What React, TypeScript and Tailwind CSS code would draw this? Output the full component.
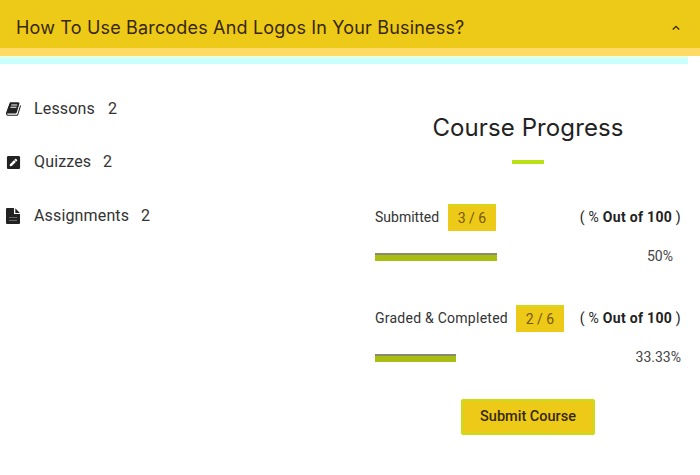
import React from "react";
import { FaPenSquare } from "react-icons/fa";

function BookIcon({ className }: { className?: string }) {
  return (
    <svg className={className} viewBox="0 0 1792 1792" fill="currentColor">
      <path d="M1639 478q40 57 18 129l-275 906q-19 64-76.5 107.5t-122.5 43.5h-923q-77 0-148.5-53.5t-99.5-131.5q-24-67-2-127 0-4 3-27t4-37q1-8-3-21.5t-3-19.5q2-11 8-21t16.5-23.5 16.5-23.5q23-38 45-91.5t30-91.5q3-10 .5-30t-.5-28q3-11 17-28t17-23q21-36 42-92t25-90q1-9-2.5-32t.5-28q4-13 22-30.5t22-22.5q19-26 42.5-84.5t27.5-96.5q1-8-3-25.5t-2-26.5q2-8 9-18t18-23 17-21q8-12 16.5-30.5t15-35 16-36 19.5-32 26.5-23.5 36-11.5 47.5 5.5l-1 3q38-9 51-9h761q74 0 114 56t18 130l-274 906q-36 119-71.5 153.5t-128.5 34.5h-869q-27 0-38 15-11 16-1 43 24 70 144 70h923q29 0 56-15.5t35-41.5l300-987q7-22 5-57 38 15 59 43zm-1064 2q-4 13 2 22.5t20 9.5h608q13 0 25.5-9.5t16.5-22.5l21-64q4-13-2-22.5t-20-9.5h-608q-13 0-25.5 9.5t-16.5 22.5zm-83 256q-4 13 2 22.5t20 9.5h608q13 0 25.5-9.5t16.5-22.5l21-64q4-13-2-22.5t-20-9.5h-608q-13 0-25.5 9.5t-16.5 22.5z" />
    </svg>
  );
}

function FileIcon({ className }: { className?: string }) {
  return (
    <svg className={className} viewBox="0 0 16 16" fill="currentColor">
      <path d="M1 0h7v6h6v9a1 1 0 0 1-1 1H1a1 1 0 0 1-1-1V1a1 1 0 0 1 1-1Z" />
      <path d="M9.3 0.3 13.9 4.9H9.3Z" />
      <path d="M3 9.5h8M3 12.5h8" stroke="#777" strokeWidth="0.8" />
    </svg>
  );
}

const items = [
  { label: "Lessons", count: 2, Icon: BookIcon, iconClass: "h-4 w-4", labelClass: "w-[62px]" },
  { label: "Quizzes", count: 2, Icon: FaPenSquare, iconClass: "h-[15px] w-[15px] mr-px", labelClass: "w-[57px]" },
  { label: "Assignments", count: 2, Icon: FileIcon, iconClass: "h-4 w-4", labelClass: "w-[95px]" },
];

function OutOf() {
  return (
    <span className="ml-auto whitespace-nowrap text-[14px] tracking-[0.3px] text-[#222]">
      ( % <b className="font-bold">Out of 100</b> )
    </span>
  );
}

function Progress({ label, score, percent, labelClass }: { label: string; score: string; percent: number; labelClass: string }) {
  return (
    <div className="h-[101px]">
      <div className="flex h-[27px] items-center">
        <span className={`whitespace-nowrap text-[14px] text-[#333] ${labelClass}`}>{label}</span>
        <span className="ml-2 flex h-[27px] w-12 items-center justify-center border-t-2 border-[#d5d819] bg-[#eeca18] text-[14px] text-[#76570c]">{score}</span>
        <OutOf />
      </div>
      <div className="mt-[15px] flex h-5 items-center justify-between">
        <div className="mt-[2px] h-2 w-[243px]">
          <div className="h-full border-t-2 border-[#888a70] bg-[#a9bd12]" style={{ width: `${percent}%` }} />
        </div>
        <span className={`text-[14px] text-[#444] ${percent === 50 ? "mr-2" : ""}`}>{percent}%</span>
      </div>
    </div>
  );
}

export default function App() {
  return (
    <div className="h-[475px] w-[700px] overflow-hidden bg-white font-['Roboto',sans-serif]">
      <header className="flex h-14 items-center justify-between border-b-8 border-[#ffdb65] bg-[#edca18] pt-[7px] pr-5 pl-4">
        <h1 className="whitespace-nowrap font-['Inter',sans-serif] text-[18px] tracking-[0.17px] text-[#38270a]">
          How To Use Barcodes And Logos In Your Business?
        </h1>
        <svg className="h-2 w-2" viewBox="0 0 8 8" fill="none" stroke="#38270a" strokeWidth="1.3">
          <path d="M0.8 5.5 4 2.3 7.2 5.5" />
        </svg>
      </header>
      <div className="h-2 w-[688px] bg-gradient-to-b from-[#e9ffe0] via-[#c8ffff] to-[#c8ffff]" />
      <main className="flex">
        <ul className="w-[375px] pt-[31px] pl-[6px]">
          {items.map(({ label, count, Icon, iconClass, labelClass }) => (
            <li key={label} className="mb-[26.5px] flex h-[27px] items-center gap-3 text-[16px] text-[#333]">
              <Icon className={`shrink-0 text-[#222] ${iconClass}`} />
              <span className={`tracking-[0.15px] ${labelClass}`}>{label}</span>
              <span>{count}</span>
            </li>
          ))}
        </ul>
        <section className="w-[306px] pt-[48px]">
          <h2 className="text-center font-['Inter',sans-serif] text-[24px] leading-8 tracking-[0.1px] text-[#222]">Course Progress</h2>
          <div className="mx-auto mt-4 h-1 w-8 bg-[#bce016]" />
          <div className="mt-[40px]">
            <Progress label="Submitted" score="3 / 6" percent={50} labelClass="w-[65px]" />
            <Progress label="Graded & Completed" score="2 / 6" percent={33.33} labelClass="w-[133px] tracking-[0.25px]" />
          </div>
          <button className="mx-auto mt-[-7px] block h-9 w-[134px] rounded-[2px] border-2 border-[#c9dc19] bg-[#edca18] text-[14.5px] font-medium text-[#38270a]">
            Submit Course
          </button>
        </section>
      </main>
    </div>
  );
}
